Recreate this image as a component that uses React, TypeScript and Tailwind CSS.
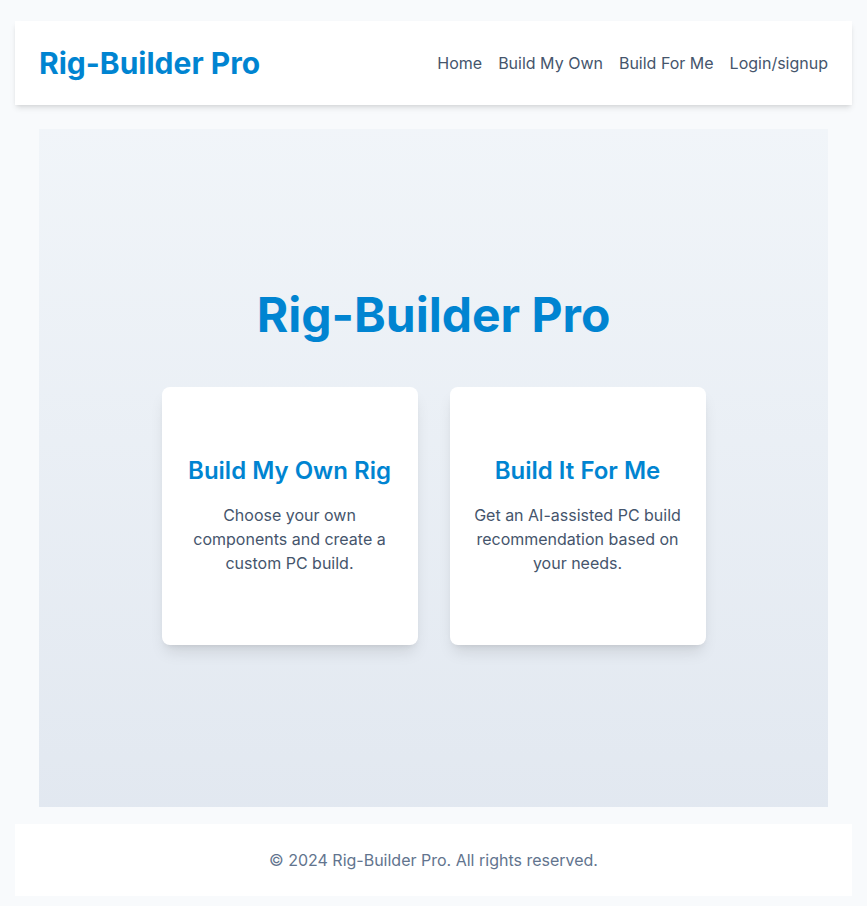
export default function App() {
  const cards = [
    {
      title: 'Build My Own Rig',
      text: 'Choose your own components and create a custom PC build.',
    },
    {
      title: 'Build It For Me',
      text: 'Get an AI-assisted PC build recommendation based on your needs.',
    },
  ]

  return (
    <div className="min-h-screen bg-slate-50 px-[15px] pt-[21px] pb-[10px] font-['Inter',sans-serif]">
      <header className="flex items-center justify-between bg-white px-6 py-6 shadow-md">
        <h1 className="text-3xl font-bold leading-9 text-sky-600">Rig-Builder Pro</h1>
        <nav className="flex gap-4 text-base text-slate-600">
          <a href="#">Home</a>
          <a href="#">Build My Own</a>
          <a href="#">Build For Me</a>
          <a href="#">Login/signup</a>
        </nav>
      </header>

      <main className="px-6 pt-6">
        <section className="flex h-[678px] flex-col items-center justify-center bg-gradient-to-b from-slate-100 to-slate-200">
          <h2 className="mb-12 text-5xl font-bold leading-none text-sky-600">Rig-Builder Pro</h2>
          <div className="flex gap-8">
            {cards.map((card) => (
              <div
                key={card.title}
                className="flex h-[258px] w-64 flex-col items-center justify-center rounded-lg bg-white px-6 pb-[2px] text-center shadow-lg"
              >
                <h3 className="mb-4 text-2xl font-semibold leading-8 text-sky-600">{card.title}</h3>
                <p className="text-base leading-6 text-slate-600">{card.text}</p>
              </div>
            ))}
          </div>
        </section>
      </main>

      <footer className="mt-[17px] bg-white p-6 text-center text-base leading-6 text-slate-500">
        © 2024 Rig-Builder Pro. All rights reserved.
      </footer>
    </div>
  )
}
